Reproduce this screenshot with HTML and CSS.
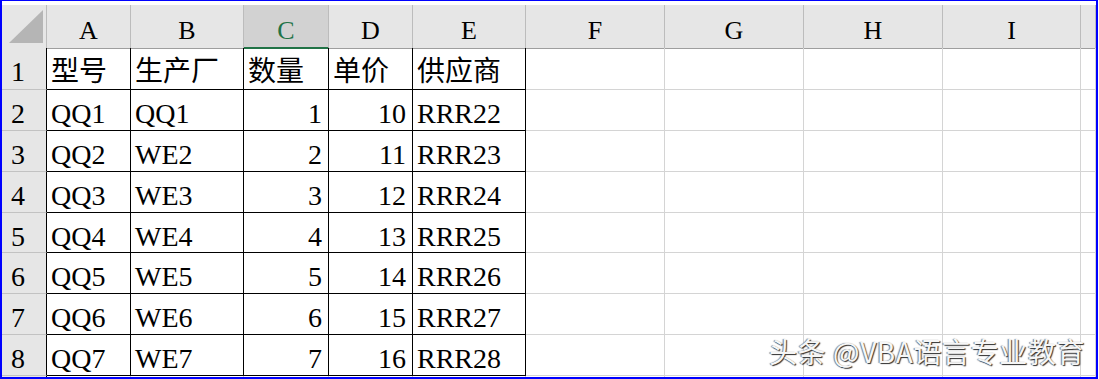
FILE: index.html
```html
<!DOCTYPE html>
<html lang="zh-CN">

<head>
    <meta charset="UTF-8">
    <meta name="viewport" content="width=device-width, initial-scale=1.0">
    <link rel="stylesheet" href="styles.css">
    <title>Sheet1</title>
</head>

<body>
    <div class="sheet">
        <!-- column headers -->
        <div class="row head">
            <div class="corner">
                <svg width="44" height="42" viewBox="0 0 44 42"><polygon points="7,38 41,38 41,5" fill="#b5b5b5" /></svg>
            </div>
            <div class="col">A</div>
            <div class="col">B</div>
            <div class="col sel">C</div>
            <div class="col">D</div>
            <div class="col">E</div>
            <div class="col">F</div>
            <div class="col">G</div>
            <div class="col">H</div>
            <div class="col">I</div>
            <div class="col"></div>
        </div>

        <div class="row tall">
            <div class="num">1</div>
            <div class="cell box">型号</div>
            <div class="cell box">生产厂</div>
            <div class="cell box">数量</div>
            <div class="cell box">单价</div>
            <div class="cell box">供应商</div>
            <div class="cell"></div><div class="cell"></div><div class="cell"></div><div class="cell"></div><div class="cell"></div>
        </div>
        <div class="row">
            <div class="num">2</div>
            <div class="cell box">QQ1</div>
            <div class="cell box">QQ1</div>
            <div class="cell box right">1</div>
            <div class="cell box right">10</div>
            <div class="cell box">RRR22</div>
            <div class="cell"></div><div class="cell"></div><div class="cell"></div><div class="cell"></div><div class="cell"></div>
        </div>
        <div class="row">
            <div class="num">3</div>
            <div class="cell box">QQ2</div>
            <div class="cell box">WE2</div>
            <div class="cell box right">2</div>
            <div class="cell box right">11</div>
            <div class="cell box">RRR23</div>
            <div class="cell"></div><div class="cell"></div><div class="cell"></div><div class="cell"></div><div class="cell"></div>
        </div>
        <div class="row">
            <div class="num">4</div>
            <div class="cell box">QQ3</div>
            <div class="cell box">WE3</div>
            <div class="cell box right">3</div>
            <div class="cell box right">12</div>
            <div class="cell box">RRR24</div>
            <div class="cell"></div><div class="cell"></div><div class="cell"></div><div class="cell"></div><div class="cell"></div>
        </div>
        <div class="row short">
            <div class="num">5</div>
            <div class="cell box">QQ4</div>
            <div class="cell box">WE4</div>
            <div class="cell box right">4</div>
            <div class="cell box right">13</div>
            <div class="cell box">RRR25</div>
            <div class="cell"></div><div class="cell"></div><div class="cell"></div><div class="cell"></div><div class="cell"></div>
        </div>
        <div class="row">
            <div class="num">6</div>
            <div class="cell box">QQ5</div>
            <div class="cell box">WE5</div>
            <div class="cell box right">5</div>
            <div class="cell box right">14</div>
            <div class="cell box">RRR26</div>
            <div class="cell"></div><div class="cell"></div><div class="cell"></div><div class="cell"></div><div class="cell"></div>
        </div>
        <div class="row">
            <div class="num">7</div>
            <div class="cell box">QQ6</div>
            <div class="cell box">WE6</div>
            <div class="cell box right">6</div>
            <div class="cell box right">15</div>
            <div class="cell box">RRR27</div>
            <div class="cell"></div><div class="cell"></div><div class="cell"></div><div class="cell"></div><div class="cell"></div>
        </div>
        <div class="row">
            <div class="num">8</div>
            <div class="cell box">QQ7</div>
            <div class="cell box">WE7</div>
            <div class="cell box right">7</div>
            <div class="cell box right">16</div>
            <div class="cell box">RRR28</div>
            <div class="cell"></div><div class="cell"></div><div class="cell"></div><div class="cell"></div><div class="cell"></div>
        </div>
        <div class="row">
            <div class="num"></div>
            <div class="cell"></div><div class="cell"></div><div class="cell"></div><div class="cell"></div><div class="cell"></div>
            <div class="cell"></div><div class="cell"></div><div class="cell"></div><div class="cell"></div><div class="cell"></div>
        </div>

        <div class="mark">头条 @VBA语言专业教育</div>
    </div>
</body>

</html>
```

FILE: styles.css
```css
* {
    box-sizing: border-box;
}

body {
    margin: 0;
    background: #fff;
}

.sheet {
    position: relative;
    width: 1098px;
    height: 379px;
    border: 2px solid #0000ff;
    border-top-width: 1px;
    padding-top: 4px;
    overflow: hidden;
    background: #fff;
    font-family: "Liberation Serif", "Noto Sans CJK SC", serif;
    color: #000;
}

.row {
    display: grid;
    grid-template-columns: 45px 84px 113px 85px 84px 113px 139px 139px 139px 138px 1fr;
    height: 41px;
}

.row.tall {
    height: 42px;
}

.row.short {
    height: 40px;
}

.row.head {
    height: 43px;
}

/* header strip */
.corner {
    background: #e6e6e6;
    border-right: 1px solid #bcbcbc;
    border-bottom: 1px solid #9e9e9e;
}

.corner svg {
    display: block;
}

.col {
    background: #e6e6e6;
    border-right: 1px solid #bcbcbc;
    border-bottom: 1px solid #9e9e9e;
    text-align: center;
    font-size: 26px;
    line-height: 32px;
    padding-top: 10px;
}

.col.sel {
    background: #d2d2d2;
    color: #217346;
    border-bottom: 2px solid #217346;
}

.num {
    background: #e6e6e6;
    border-right: 1px solid #000;
    border-bottom: 1px solid #c2c2c2;
    font-size: 28px;
    line-height: 32px;
    padding: 8px 0 0 9px;
    overflow: hidden;
}

/* cells */
.cell {
    border-right: 1px solid #d4d4d4;
    border-bottom: 1px solid #d4d4d4;
    font-size: 28px;
    line-height: 32px;
    padding: 8px 4px 0 4px;
    white-space: nowrap;
    overflow: hidden;
}

.cell.box {
    border-right-color: #000;
    border-bottom-color: #000;
}

.cell.right {
    text-align: right;
    padding-right: 6px;
}

.mark {
    position: absolute;
    left: 767px;
    top: 332px;
    font-family: "Noto Sans CJK SC", sans-serif;
    font-size: 28px;
    letter-spacing: 0.6px;
    line-height: 36px;
    color: #f6f6f6;
    text-shadow: 1px 1px 1px #2e2e2e, -1px 0 1px #7a7a7a;
    white-space: nowrap;
}
```
